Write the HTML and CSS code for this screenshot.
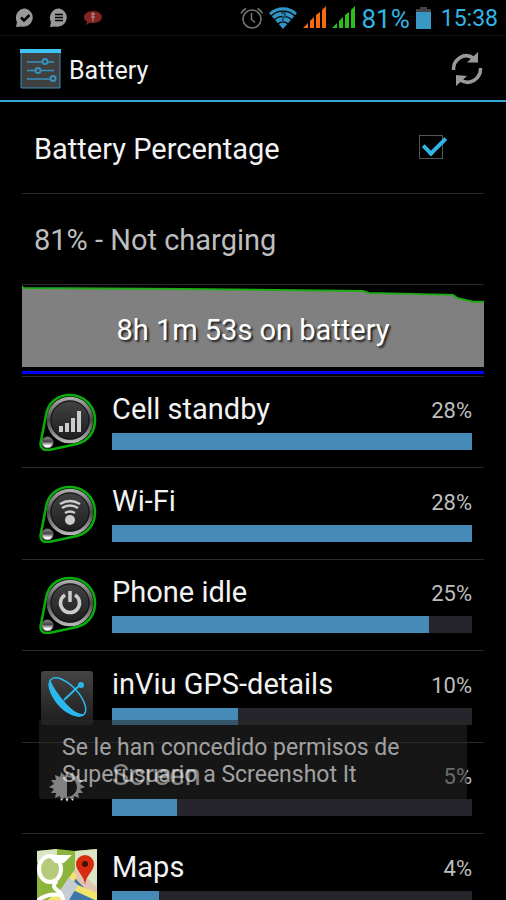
FILE: index.html
```
<!DOCTYPE html>
<html lang="en">
<head>
  <meta charset="UTF-8">
  <meta name="viewport" content="width=device-width, initial-scale=1.0">
  <title>Battery</title>
  <link rel="stylesheet" href="styles.css">
</head>
<body>
  <!-- shared shapes for the three system icons -->
  <svg class="defs" width="0" height="0" aria-hidden="true">
    <defs>
      <linearGradient id="ring" x1="0" y1="0" x2="0" y2="1">
        <stop offset="0" stop-color="#aaa"/>
        <stop offset="0.5" stop-color="#484848"/>
        <stop offset="1" stop-color="#b4b4b4"/>
      </linearGradient>
      <linearGradient id="face" x1="0" y1="0" x2="0" y2="1">
        <stop offset="0" stop-color="#444"/>
        <stop offset="1" stop-color="#1c1c1c"/>
      </linearGradient>
      <linearGradient id="ball" x1="0" y1="0" x2="0" y2="1">
        <stop offset="0" stop-color="#888"/>
        <stop offset="0.4" stop-color="#444"/>
        <stop offset="0.8" stop-color="#fff"/>
      </linearGradient>
      <symbol id="badge" viewBox="0 0 60 60">
        <path d="M9 24C11 12 20 4 33 4c14 0 25 11 25 25 0 12-7 21-18 24L12 59C6 60 2 56 4 50z" fill="#000" stroke="#0aae0a" stroke-width="2.500"/>
        <circle cx="33" cy="29" r="21.500" fill="url(#face)" stroke="url(#ring)" stroke-width="3.500"/>
        <circle cx="33" cy="29" r="19" fill="none" stroke="#111"/>
        <circle cx="10.500" cy="51.500" r="5.500" fill="url(#ball)" stroke="#777"/>
      </symbol>
    </defs>
  </svg>

  <div class="screen">
    <div class="status-bar">
      <div class="status-left">
        <svg width="20" height="20" viewBox="0 0 20 20">
          <path d="M10.500 0.500a9.200 9.200 0 1 1-4 18l-5.500.5 1-5A9.200 9.200 0 0 1 10.500.5z" fill="#999"/>
          <path d="M6 9.500l3 3 5.500-5.500" fill="none" stroke="#000" stroke-width="2.500"/>
        </svg>
        <svg width="20" height="20" viewBox="0 0 20 20">
          <path d="M10.500 0.500a9.200 9.200 0 1 1-4 18l-5.500.5 1-5A9.200 9.200 0 0 1 10.500.5z" fill="#999"/>
          <path d="M6 6.500h8M6 9.500h8M6 12.500h8" stroke="#000" stroke-width="1.500"/>
        </svg>
        <svg width="20" height="20" viewBox="0 0 20 20">
          <path d="M10 3c5 0 9 3 9 6s-4 6-9 6c-1 0-2 0-3-.5L3 17l1-3.500C2 12.500 1 11 1 9c0-3 4-6 9-6z" fill="#852420"/>
          <path d="M8 6h4M8 9h4M10 4.500v9" stroke="#b59a98" stroke-width="1"/>
        </svg>
      </div>
      <div class="status-right">
        <svg width="24" height="24" viewBox="0 0 24 24" fill="none" stroke="#777" stroke-width="1.500">
          <circle cx="13" cy="13" r="9"/>
          <path d="M12.500 7v6.500l3.500 3M2 7.500a12 12 0 0 1 5-5M23.500 7.500a12 12 0 0 0-5-5"/>
        </svg>
        <svg width="28" height="24" viewBox="0 0 28 24">
          <path d="M0 7a20 20 0 0 1 28 0L14 23z" fill="#3294c4"/>
          <path d="M2 10a17 17 0 0 1 24 0M5 14a13 13 0 0 1 18 0M9 18a7 7 0 0 1 10 0" fill="none" stroke="#000" stroke-width="1.200"/>
          <path d="M12 7h4v4h-2v5" fill="none" stroke="#19536f" stroke-width="2"/>
        </svg>
        <svg width="23" height="23" viewBox="0 0 23 23" fill="#f86a10">
          <path d="M0 22l5-5v5zM7 15l4-4v11H7zM13 9l4-3v16h-4zM19 4l4-4v22h-4z"/>
        </svg>
        <svg width="23" height="23" viewBox="0 0 23 23" fill="#2dbd1c">
          <path d="M0 22l5-5v5zM7 15l4-4v11H7zM13 9l4-3v16h-4zM19 4l4-4v22h-4z"/>
        </svg>
        <span class="status-percent">81%</span>
        <svg width="15" height="22" viewBox="0 0 15 22">
          <path d="M4 0h7v2h4v4H0V2h4z" fill="#444"/>
          <path d="M0 5h15v17H0z" fill="#3a97c4"/>
        </svg>
        <span class="clock">15:38</span>
      </div>
    </div>

    <header class="action-bar">
      <svg width="41" height="40" viewBox="0 0 41 40">
        <path d="M1 1h39v38H1z" fill="#404040" stroke="#3b8fb8"/>
        <path d="M0 0h41v4H0z" fill="#40c4f5"/>
        <g stroke="#3792c0" stroke-width="1.500" fill="#404040">
          <path d="M7 13h27M7 21.500h27M7 30h27"/>
          <g stroke-width="2">
            <circle cx="25" cy="12.500" r="2.500"/>
            <circle cx="18" cy="21.500" r="2.500"/>
            <circle cx="33" cy="29.500" r="2.500"/>
          </g>
        </g>
      </svg>
      <h1>Battery</h1>
      <button type="button" class="refresh" aria-label="Refresh">
        <svg width="32" height="34" viewBox="0 0 32 34">
          <path d="M2.500 18C2 8 13-1 23 6.500M29.500 16C30 26 19 35 9 27.500" fill="none" stroke="#999" stroke-width="3.500"/>
          <path d="M27 0v10.500H16zM5 34V23l11 1z" fill="#999"/>
        </svg>
      </button>
    </header>

    <main>
      <label class="row setting">
        <span>Battery Percentage</span>
        <input type="checkbox" class="check" checked>
      </label>
      <div class="row summary">81% - Not charging</div>

      <a href="#" class="chart">
        <svg class="graph" viewBox="0 0 461 83" preserveAspectRatio="none">
          <path d="M0 3L160 4 340 6 346 8 430 10 434 13 450 17 461 17V83H0z" fill="#808080"/>
          <path d="M0 1L1 3 160 4 340 6 346 8 430 10 434 13 450 17 461 17" fill="none" stroke="#1fab18" stroke-width="2"/>
        </svg>
        <span class="chart-label">8h 1m 53s on battery</span>
      </a>

      <ul class="usage">
        <li>
          <svg class="icon" viewBox="0 0 60 60">
            <use href="#badge"/>
            <path d="M22 35h4v6h-4zM28 32h4v9h-4zM34 27h4v14h-4zM40 20h4v21h-4z" fill="#ccc"/>
          </svg>
          <div class="info">
            <span class="name">Cell standby</span>
            <span class="percent">28%</span>
            <div class="bar"><div class="fill" style="width: 100%"></div></div>
          </div>
        </li>
        <li>
          <svg class="icon" viewBox="0 0 60 60">
            <use href="#badge"/>
            <path d="M23 21q10-6 20 0M25 25q8-5 16 0M28 30q5-3 10 0" fill="none" stroke="#ccc" stroke-width="2.500"/>
            <circle cx="33" cy="37" r="5" fill="#ccc"/>
          </svg>
          <div class="info">
            <span class="name">Wi-Fi</span>
            <span class="percent">28%</span>
            <div class="bar"><div class="fill" style="width: 100%"></div></div>
          </div>
        </li>
        <li>
          <svg class="icon" viewBox="0 0 60 60">
            <use href="#badge"/>
            <path d="M28 21a9.500 9.500 0 1 0 10 0M33 17v11" fill="none" stroke="#ccc" stroke-width="3.500"/>
          </svg>
          <div class="info">
            <span class="name">Phone idle</span>
            <span class="percent">25%</span>
            <div class="bar"><div class="fill" style="width: 88%"></div></div>
          </div>
        </li>
        <li>
          <svg class="icon" viewBox="0 0 60 60">
            <rect x="4" y="5" width="52" height="54" rx="3" fill="url(#face)"/>
            <path d="M13 13c-3 7 1 19 10 28s19 11 25 7c-6 1-14-4-21-13-8-9-13-18-14-22z" fill="#2ab8ee"/>
            <ellipse cx="30.500" cy="31" rx="11" ry="24" transform="rotate(-43 30.500 31)" fill="none" stroke="#2ab8ee" stroke-width="1.500"/>
            <path d="M27 34l17-16" stroke="#2ab8ee" stroke-width="2"/>
            <circle cx="44" cy="19" r="3" fill="#2ab8ee"/>
          </svg>
          <div class="info">
            <span class="name">inViu GPS-details</span>
            <span class="percent">10%</span>
            <div class="bar"><div class="fill" style="width: 35%"></div></div>
          </div>
        </li>
        <li>
          <svg class="icon" viewBox="0 0 60 60">
            <path d="M30 14l2 5 4-4 1 5 5-2-1 5 5 0-3 4 5 3-5 2 3 4h-5l1 5-5-2-1 5-4-4-2 5-2-5-4 4-1-5-5 2 1-5h-5l3-4-5-2 5-3-3-4 5 0-1-5 5 2 1-5 4 4z" fill="#eee"/>
            <path d="M30 20a10 10 0 0 1 0 20z" fill="#000"/>
          </svg>
          <div class="info">
            <span class="name">Screen</span>
            <span class="percent">5%</span>
            <div class="bar"><div class="fill" style="width: 18%"></div></div>
          </div>
        </li>
        <li>
          <svg class="icon" viewBox="0 0 60 60">
            <path d="M0 2l20-2 18 2 22-2v60H0z" fill="#8db43c"/>
            <path d="M0 2l20-2v13H0zM38 2l22-2v60H38z" fill="#dce4c6"/>
            <path d="M38 20l22 18v14L26 40z" fill="#e3c4b0"/>
            <path d="M20 55l16-28 24 25v8H20z" fill="#3d77a8"/>
            <path d="M0 60l24-20 12-17 4 4-10 19-14 14zM36 34l24 10v8L36 41z" fill="#f1e66b"/>
            <path d="M22 44l10-16 9 8-12 20z" fill="#c5ccd2"/>
            <ellipse cx="13" cy="20" rx="11" ry="13" fill="#b5cb79" stroke="#fff" stroke-width="4"/>
            <path d="M15 8h15l-4 4h-7zM20 32q-6 5 0 9 8 5 6 19M24 46q-14-2-24 6" fill="none" stroke="#fff" stroke-width="4"/>
            <path d="M48 6a9 9 0 0 1 9 9c0 8-8 10-9 21-1-11-9-13-9-21a9 9 0 0 1 9-9z" fill="#d62c10"/>
            <circle cx="48" cy="15" r="3" fill="#431008"/>
          </svg>
          <div class="info">
            <span class="name">Maps</span>
            <span class="percent">4%</span>
            <div class="bar"><div class="fill" style="width: 13%"></div></div>
          </div>
        </li>
      </ul>
    </main>

    <div class="toast" role="status">Se le han concedido permisos de Superusuario a Screenshot It</div>
  </div>
</body>
</html>
```

FILE: styles.css
```
* {
  box-sizing: border-box;
}

body {
  margin: 0;
  background-color: #000;
  color: #f3f3f3;
  font-family: Roboto, "Noto Sans", sans-serif;
  font-size: 29px;
}

svg {
  display: block;
  flex-shrink: 0;
}

.defs {
  position: absolute;
}

.screen {
  position: relative;
  height: 100vh;
  overflow: hidden;
}

.status-bar {
  display: flex;
  justify-content: space-between;
  align-items: center;
  height: 36px;
  padding: 0 8px 0 15px;
  border-bottom: 1px solid #111;
  color: #33b5e5;
}

.status-left {
  display: flex;
  gap: 14px;
}

.status-right {
  display: flex;
  align-items: center;
  gap: 6px;
}

.status-percent {
  padding-top: 2px;
  font-size: 26px;
}

.clock {
  padding: 2px 0 0 4px;
  font-size: 23px;
}

.action-bar {
  display: flex;
  align-items: center;
  gap: 8px;
  height: 66px;
  padding: 2px 23px 0 20px;
  border-bottom: 2px solid #33a9d6;
}

h1 {
  flex: 1;
  margin: 0;
  padding-top: 2px;
  font-size: 25px;
  font-weight: normal;
}

.refresh {
  padding: 0;
  border: none;
  background: none;
  cursor: pointer;
}

main {
  padding: 1px 22px 0;
}

.row {
  display: flex;
  justify-content: space-between;
  align-items: center;
  height: 91px;
  padding: 2px 41px 0 12px;
  border-bottom: 1px solid #2a2a2a;
}

.summary {
  color: #bebebe;
}

.check {
  appearance: none;
  width: 24px;
  height: 24px;
  margin: 0 0 4px;
  border: 1px solid #555;
  position: relative;
}

.check:checked::after {
  content: "";
  position: absolute;
  left: 8px;
  top: -4px;
  width: 9px;
  height: 19px;
  border: solid #33b5e5;
  border-width: 0 4px 4px 0;
  transform: rotate(45deg);
}

.chart {
  display: grid;
  height: 92px;
  border-bottom: 1px solid #2a2a2a;
  color: #fff;
  text-decoration: none;
}

.graph,
.chart-label {
  grid-area: 1 / 1;
}

.graph {
  width: 100%;
  height: 82px;
}

.chart::after {
  content: "";
  align-self: end;
  height: 3px;
  margin-bottom: 2px;
  background-color: #00f;
}

.chart-label {
  align-self: center;
  padding-top: 6px;
  text-align: center;
  text-shadow: 2px 2px 2px #222;
}

.usage {
  margin: 0;
  padding: 0;
  list-style: none;
}

.usage li {
  display: flex;
  align-items: center;
  gap: 15px;
  height: 91px;
  padding: 0 12px 2px 15px;
  border-bottom: 1px solid #2a2a2a;
}

.usage li:nth-child(even) {
  height: 92px;
}

.icon {
  width: 60px;
  height: 60px;
}

.info {
  flex: 1;
  display: grid;
  grid-template-columns: 1fr auto;
  align-items: center;
  row-gap: 7px;
}

.name {
  line-height: 34px;
}

.percent {
  padding-top: 4px;
  color: #bebebe;
  font-size: 22px;
  line-height: 30px;
}

.bar {
  grid-column: 1 / 3;
  height: 17px;
  background-color: #26252b;
}

.fill {
  height: 100%;
  background-color: #468bb8;
}

.toast {
  position: absolute;
  left: 39px;
  right: 39px;
  bottom: 101px;
  padding: 14px 23px 11px;
  border-radius: 2px;
  background-color: rgba(40, 40, 40, 0.55);
  color: rgba(255, 255, 255, 0.6);
  font-size: 23px;
  line-height: 27px;
}
```
